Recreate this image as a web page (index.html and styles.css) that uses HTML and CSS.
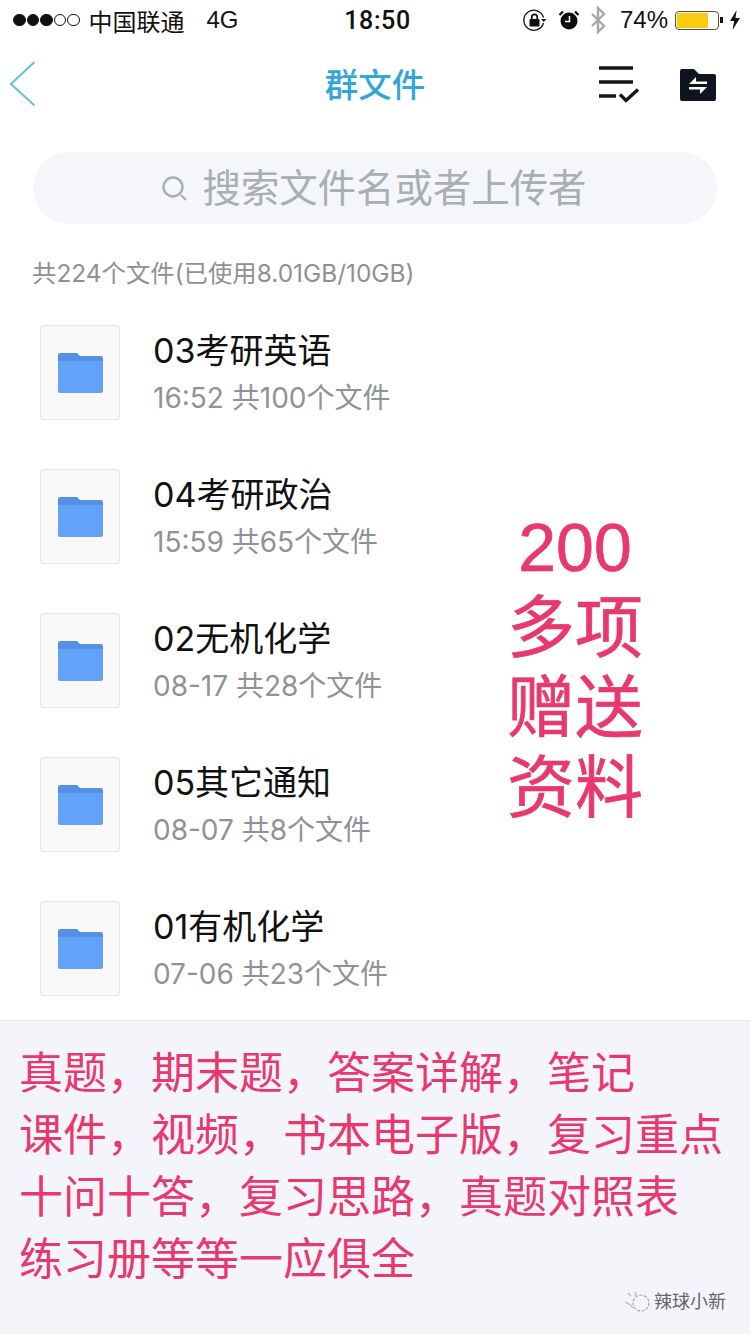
FILE: index.html
```html
<!DOCTYPE html>
<html lang="zh">
<head>
<meta charset="utf-8">
<title>群文件</title>
<link rel="stylesheet" href="styles.css">
</head>
<body>
<div class="screen">
  <header class="status">
    <div class="status-left">
      <span class="signal"><i class="dot on"></i><i class="dot on"></i><i class="dot on"></i><i class="dot"></i><i class="dot"></i></span>
      <span class="carrier">中国联通</span>
      <span class="net">4G</span>
    </div>
    <div class="time">18:50</div>
    <div class="status-right">
      <svg class="ic-lock" width="24" height="24" viewBox="0 0 24 24"><path d="M20.5 9.5A10 10 0 1 0 20.5 15" fill="none" stroke="#111" stroke-width="1.3"/><path d="M18 11h5.500l-2.750 3z" fill="#111"/><rect x="6.500" y="11" width="10" height="7.500" rx="1" fill="#111"/><path d="M8.800 11V9a2.700 2.700 0 0 1 5.400 0v2" fill="none" stroke="#111" stroke-width="1.700"/></svg>
      <svg class="ic-alarm" width="22" height="22" viewBox="0 0 22 22"><circle cx="11" cy="12" r="8.500" fill="#0c0c0c"/><path d="M11.500 7v5.500H7" fill="none" stroke="#fff" stroke-width="1.500"/><path d="M1.500 6 5 2.500M20.500 6 17 2.500" stroke="#0c0c0c" stroke-width="2.200"/></svg>
      <svg class="ic-bt" width="16" height="28" viewBox="0 0 16 28"><path d="M2 8l12 12-6 6V2l6 6L2 20" fill="none" stroke="#a9a9a9" stroke-width="2.400"/></svg>
      <span class="pct">74%</span>
      <span class="battery"><span class="battery-fill"></span></span>
      <span class="battery-tip"></span>
      <svg class="ic-bolt" width="10" height="20" viewBox="0 0 12 20" preserveAspectRatio="none"><path d="M8 0 0 11h5l-2 9 9-12H6.500z" fill="#111"/></svg>
    </div>
  </header>

  <nav class="nav">
    <svg class="back" width="28" height="48" viewBox="0 0 28 48"><path d="M25.500 2 2 24l23.500 21.500" fill="none" stroke="#6cc3cf" stroke-width="2.200"/></svg>
    <h1 class="nav-title">群文件</h1>
    <div class="nav-actions">
      <svg width="42" height="38" viewBox="0 0 42 38"><path d="M1 3h34M1 17h34M1 31h17" stroke="#12151c" stroke-width="3.400" fill="none"/><path d="M22 29.500l6 6 12-11" stroke="#12151c" stroke-width="3.400" fill="none"/></svg>
      <svg class="ic-transfer" width="36" height="32" viewBox="0 0 36 32"><path d="M2 0h12l5 5h15a2 2 0 0 1 2 2v23a2 2 0 0 1-2 2H2a2 2 0 0 1-2-2V2a2 2 0 0 1 2-2z" fill="#0f1420"/><path d="M9 15l7-7v4.500h11V15zM27 18l-7 7v-4.500H9V18z" fill="#fff"/></svg>
    </div>
  </nav>

  <div class="search">
    <svg width="26" height="26" viewBox="0 0 26 26"><circle cx="11" cy="11" r="9.500" fill="none" stroke="#a8adb5" stroke-width="2.400"/><path d="M19 19l5 5" stroke="#a8adb5" stroke-width="2"/></svg>
    <span>搜索文件名或者上传者</span>
  </div>

  <p class="summary">共224个文件(已使用8.01GB/10GB)</p>

  <main class="list">
    <section class="row">
      <div class="thumb"><svg width="45" height="40" viewBox="0 0 45 40"><path d="M0 8h45v30a2 2 0 0 1-2 2H2a2 2 0 0 1-2-2z" fill="#62a2f8"/><path d="M2 0h17l3 3h21a2 2 0 0 1 2 2v3H0V2a2 2 0 0 1 2-2z" fill="#5590e4"/></svg></div>
      <div class="info"><div class="name">03考研英语</div><div class="meta">16:52 共100个文件</div></div>
    </section>
    <section class="row">
      <div class="thumb"><svg width="45" height="40" viewBox="0 0 45 40"><path d="M0 8h45v30a2 2 0 0 1-2 2H2a2 2 0 0 1-2-2z" fill="#62a2f8"/><path d="M2 0h17l3 3h21a2 2 0 0 1 2 2v3H0V2a2 2 0 0 1 2-2z" fill="#5590e4"/></svg></div>
      <div class="info"><div class="name">04考研政治</div><div class="meta">15:59 共65个文件</div></div>
    </section>
    <section class="row">
      <div class="thumb"><svg width="45" height="40" viewBox="0 0 45 40"><path d="M0 8h45v30a2 2 0 0 1-2 2H2a2 2 0 0 1-2-2z" fill="#62a2f8"/><path d="M2 0h17l3 3h21a2 2 0 0 1 2 2v3H0V2a2 2 0 0 1 2-2z" fill="#5590e4"/></svg></div>
      <div class="info"><div class="name">02无机化学</div><div class="meta">08-17 共28个文件</div></div>
    </section>
    <section class="row">
      <div class="thumb"><svg width="45" height="40" viewBox="0 0 45 40"><path d="M0 8h45v30a2 2 0 0 1-2 2H2a2 2 0 0 1-2-2z" fill="#62a2f8"/><path d="M2 0h17l3 3h21a2 2 0 0 1 2 2v3H0V2a2 2 0 0 1 2-2z" fill="#5590e4"/></svg></div>
      <div class="info"><div class="name">05其它通知</div><div class="meta">08-07 共8个文件</div></div>
    </section>
    <section class="row">
      <div class="thumb"><svg width="45" height="40" viewBox="0 0 45 40"><path d="M0 8h45v30a2 2 0 0 1-2 2H2a2 2 0 0 1-2-2z" fill="#62a2f8"/><path d="M2 0h17l3 3h21a2 2 0 0 1 2 2v3H0V2a2 2 0 0 1 2-2z" fill="#5590e4"/></svg></div>
      <div class="info"><div class="name">01有机化学</div><div class="meta">07-06 共23个文件</div></div>
    </section>
    <div class="promo">
      <div class="promo-num">200</div>
      <div>多项</div>
      <div>赠送</div>
      <div>资料</div>
    </div>
  </main>

  <footer class="panel">
    <p>真题，期末题，答案详解，笔记</p>
    <p>课件，视频，书本电子版，复习重点</p>
    <p>十问十答，复习思路，真题对照表</p>
    <p>练习册等等一应俱全</p>
    <div class="mark">
      <svg width="28" height="24" viewBox="0 0 28 24"><circle cx="18" cy="13" r="8" fill="none" stroke="#a5a5a5" stroke-width="1.200" stroke-dasharray="3 1.500"/><path d="M2 12c3 1 6 3 8 6M5 3l3 3M13 2l-1 4" stroke="#b5b5b5" stroke-width="1.200" fill="none"/></svg>
      <span>辣球小新</span>
    </div>
  </footer>
</div>
</body>
</html>
```
FILE: styles.css
```css
* { box-sizing: border-box; }
html, body { margin: 0; padding: 0; background: #fff; }
body { font-family: "Liberation Sans", "Noto Sans CJK SC", sans-serif; }
.screen { position: relative; width: 750px; height: 1334px; overflow: hidden; display: flex; flex-direction: column; }

.status { height: 42px; flex: none; display: flex; justify-content: space-between; align-items: center; padding: 0 10px 2px 13px; color: #111; font-size: 24px; }
.status-left { display: flex; align-items: center; width: 320px; }
.signal { display: flex; gap: 1px; margin-right: 9px; }
.dot { width: 12.500px; height: 12.500px; border-radius: 50%; border: 1.200px solid #111; }
.dot.on { background: #111; }
.carrier { font-size: 24px; }
.net { margin-left: 22px; }
.time { font-family: Roboto, sans-serif; font-size: 25px; font-weight: 500; letter-spacing: .6px; margin-left: 2px; }
.status-right { display: flex; align-items: center; justify-content: flex-end; width: 320px; }
.ic-alarm { margin-left: 11px; }
.ic-bt { margin-left: 10px; }
.pct { margin-left: 14px; }
.battery { width: 44px; height: 19px; margin-left: 7px; border: 1.500px solid #5a5236; border-radius: 4px; padding: 1px; }
.battery-fill { display: block; width: 31px; height: 100%; background: #f9cc10; }
.battery-tip { width: 3px; height: 6px; margin-left: 1px; background: #111; }
.ic-bolt { margin-left: 7px; }

.nav { position: relative; height: 84px; flex: none; display: flex; align-items: center; justify-content: space-between; padding: 0 34px 0 9px; }
.nav-title { position: absolute; left: 0; right: 0; top: 2px; margin: 0; text-align: center; font-size: 33.500px; font-weight: 500; line-height: 84px; color: #31a7d9; }
.nav-actions { position: relative; display: flex; align-items: center; gap: 40px; }
.ic-transfer { margin-top: 2px; }

.search { height: 72px; flex: none; margin: 26px 33px 0; border-radius: 36px; background: #f4f6f9; display: flex; align-items: center; justify-content: center; gap: 15px; color: #a9adb4; font-size: 38.400px; padding: 0 2px 6px 0; }
.search svg { margin-top: 8px; }

.summary { margin: 32px 0 0 32px; font-family: Inter, "Noto Sans CJK SC", sans-serif; font-size: 24.400px; line-height: 34px; color: #8d9096; }

.list { position: relative; flex: 1; display: flex; flex-direction: column; padding: 35px 0 0 40px; gap: 48px; font-family: Inter, "Noto Sans CJK SC", sans-serif; }
.row { display: flex; align-items: center; gap: 33px; height: 96px; flex: none; }
.thumb { width: 80px; height: 95px; align-self: flex-start; display: flex; align-items: center; justify-content: center; background: #f9f9f9; border: 1px solid #e6e6e6; border-radius: 3px; }
.info { display: flex; flex-direction: column; gap: 9px; margin-top: -1px; }
.name { font-size: 34px; line-height: 40px; color: #111; }
.meta { font-size: 28px; line-height: 34px; color: #8f9296; margin-top: 1px; }

.promo { position: absolute; left: 505px; top: 217px; width: 140px; text-align: center; color: #e8396f; font-size: 68px; line-height: 80px; -webkit-text-stroke: .7px #e8396f; }
.promo-num { font-family: "Liberation Sans", sans-serif; }

.panel { position: relative; height: 314px; flex: none; background: #f4f5fa; border-top: 1px solid #e4e5e9; padding: 22px 0 0 19px; color: #e8396f; font-size: 44px; line-height: 62px; white-space: nowrap; }
.panel p { margin: 0; }
.mark { position: absolute; right: 24px; bottom: 20px; display: flex; align-items: center; gap: 3px; font-size: 18px; line-height: 24px; color: #666; }
```
